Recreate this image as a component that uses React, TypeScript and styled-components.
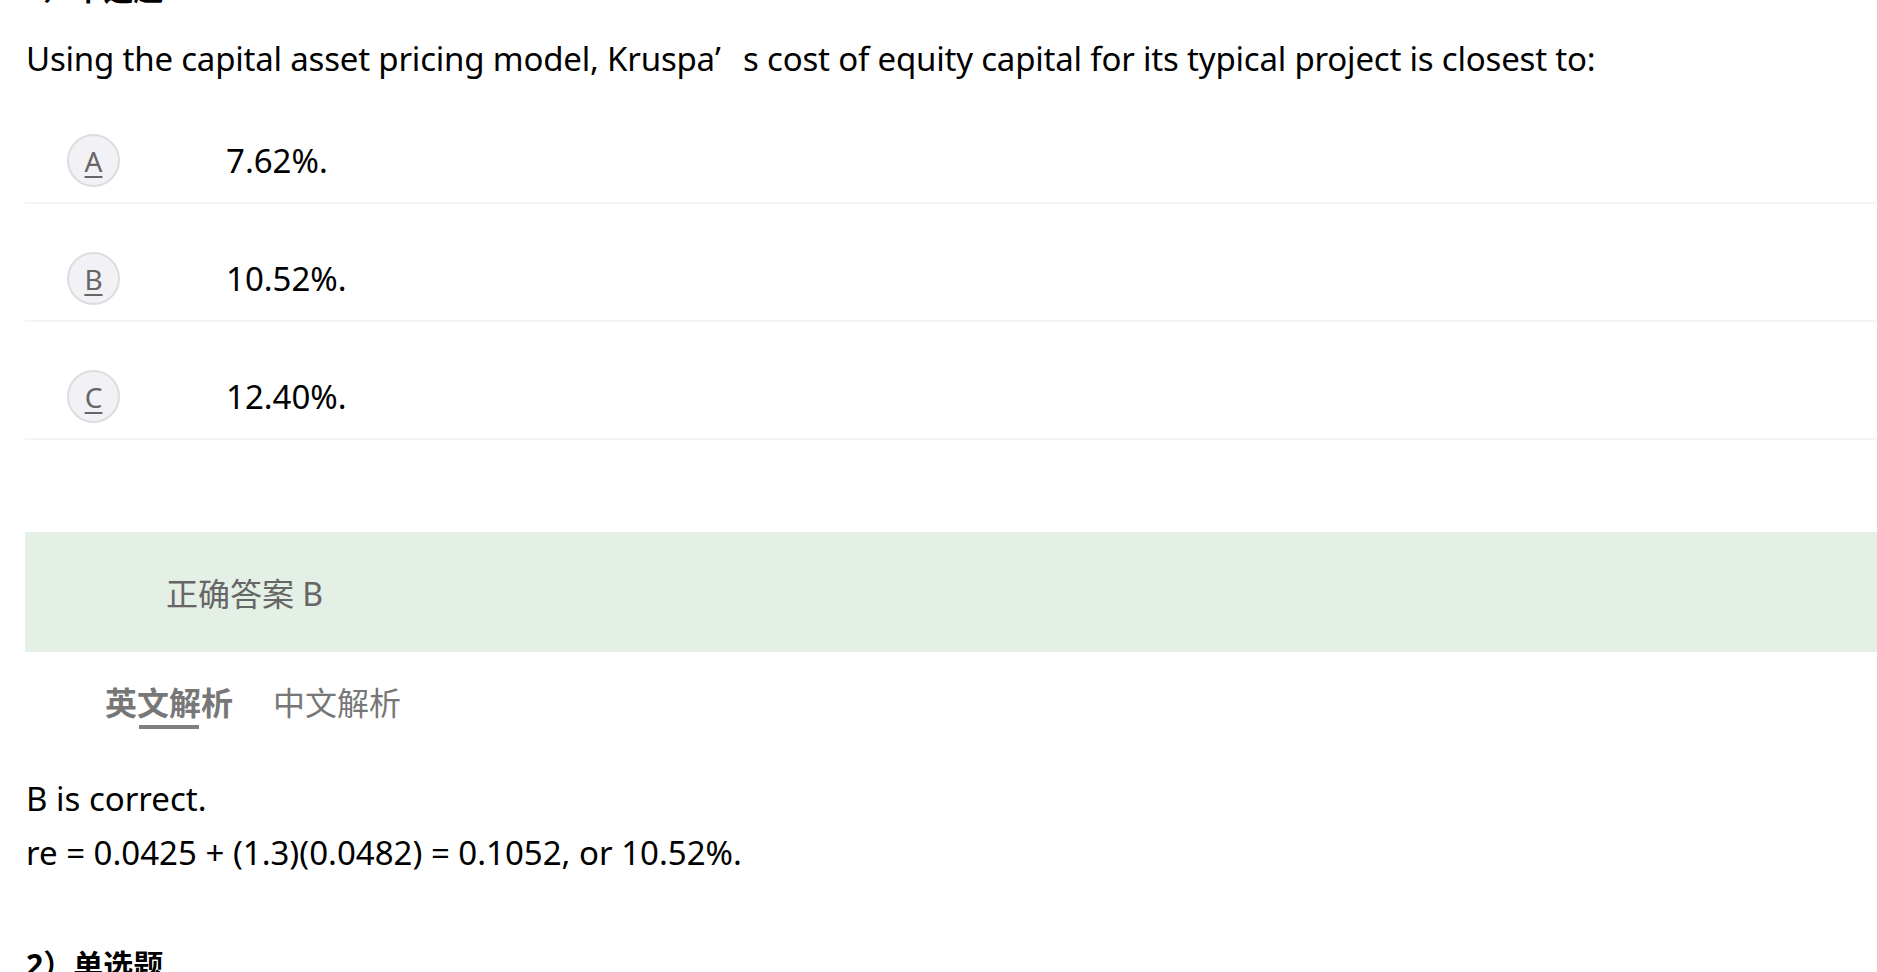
import React, { useState } from "react";
import styled, { createGlobalStyle } from "styled-components";

const GlobalStyle = createGlobalStyle`
  html, body {
    margin: 0;
    padding: 0;
    background: #ffffff;
    overflow: hidden;
  }
  body {
    font-family: "Noto Sans", "Noto Sans CJK SC", sans-serif;
    color: #000000;
  }
`;

const Page = styled.div`
  box-sizing: border-box;
  padding-left: 25px;
  width: 100%;
`;

const SectionTitle = styled.div<{ $first?: boolean }>`
  font-family: "Noto Sans", "Noto Sans CJK SC", sans-serif;
  font-weight: 700;
  font-size: 30px;
  line-height: 40px;
  margin-top: ${(p) => (p.$first ? "-31px" : "65px")};
  padding-left: 1px;
`;

const Question = styled.div`
  font-size: 33px;
  line-height: 50px;
  letter-spacing: -0.2px;
  margin-top: 25px;
  padding-left: 1px;
`;

/* full-width apostrophe as rendered by the source page's CJK font */
const WideQuote = styled.span`
  display: inline-block;
  width: 0.6em;
`;

const OptionList = styled.div`
  display: flex;
  flex-direction: column;
  gap: 48px;
  margin-top: 50px;
`;

const OptionRow = styled.div`
  display: flex;
  align-items: center;
  padding-bottom: 15px;
  border-bottom: 2px solid #f5f5f5;
`;

const Bubble = styled.div`
  box-sizing: border-box;
  flex: none;
  width: 53px;
  height: 53px;
  margin-left: 42px;
  border-radius: 50%;
  border: 2px solid #dddddd;
  background: #f2f1f6;
  display: flex;
  align-items: center;
  justify-content: center;
  color: #666666;
  font-size: 28px;
  text-decoration: underline;
  text-decoration-thickness: 2px;
  text-underline-offset: 4px;
`;

const OptionText = styled.div`
  margin-left: 106px;
  font-size: 33px;
  line-height: 53px;
`;

const AnswerBox = styled.div`
  display: flex;
  align-items: center;
  height: 120px;
  margin-top: 92px;
  padding-left: 141px;
  background: #e4efe5;
  color: #666666;
  font-size: 32px;
`;

const Tabs = styled.div`
  display: flex;
  gap: 40px;
  margin-top: 27px;
  padding-left: 80px;
`;

const Tab = styled.div<{ $active?: boolean }>`
  font-family: "Noto Sans CJK SC", sans-serif;
  font-size: 32px;
  line-height: 44px;
  color: #777777;
  font-weight: ${(p) => (p.$active ? 700 : 400)};
  cursor: pointer;

  &::after {
    content: "";
    display: block;
    width: 60px;
    height: 4px;
    margin: 2px auto 0;
    background: ${(p) => (p.$active ? "#7f7f7f" : "transparent")};
  }
`;

const Explanation = styled.div`
  margin-top: 43px;
  font-size: 33px;
  line-height: 54px;
  padding-left: 1px;
`;

const options = [
  { key: "A", text: "7.62%." },
  { key: "B", text: "10.52%." },
  { key: "C", text: "12.40%." },
];

const App = () => {
  const [tab, setTab] = useState(0);

  return (
    <Page>
      <GlobalStyle />
      <SectionTitle $first>1）单选题</SectionTitle>
      <Question>
        Using the capital asset pricing model, Kruspa<WideQuote>’</WideQuote> s cost of
        equity capital for its typical project is closest to:
      </Question>
      <OptionList>
        {options.map((o) => (
          <OptionRow key={o.key}>
            <Bubble>{o.key}</Bubble>
            <OptionText>{o.text}</OptionText>
          </OptionRow>
        ))}
      </OptionList>
      <AnswerBox>正确答案 B</AnswerBox>
      <Tabs>
        <Tab $active={tab === 0} onClick={() => setTab(0)}>
          英文解析
        </Tab>
        <Tab $active={tab === 1} onClick={() => setTab(1)}>
          中文解析
        </Tab>
      </Tabs>
      <Explanation>
        <div>B is correct.</div>
        <div>re = 0.0425 + (1.3)(0.0482) = 0.1052, or 10.52%.</div>
      </Explanation>
      <SectionTitle>2）单选题</SectionTitle>
    </Page>
  );
};

export default App;
